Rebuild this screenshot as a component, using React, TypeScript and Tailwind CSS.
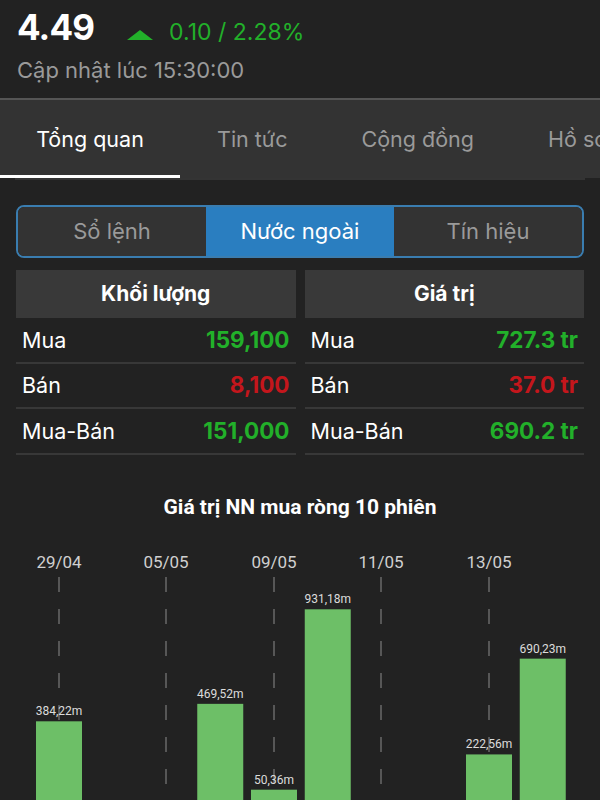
import React from 'react';

const tabs = ['Tổng quan', 'Tin tức', 'Cộng đồng', 'Hồ sơ'];
const segments = ['Sổ lệnh', 'Nước ngoài', 'Tín hiệu'];

const volumeRows = [
  { label: 'Mua', value: '159,100', up: true },
  { label: 'Bán', value: '8,100', up: false },
  { label: 'Mua-Bán', value: '151,000', up: true },
];

const valueRows = [
  { label: 'Mua', value: '727.3 tr', up: true },
  { label: 'Bán', value: '37.0 tr', up: false },
  { label: 'Mua-Bán', value: '690.2 tr', up: true },
];

// null = negative session, bar sits below the visible area
const sessions: (number | null)[] = [384.22, null, null, 469.52, 50.36, 931.18, null, null, 222.56, 690.23];
const dates = [
  { x: 59, text: '29/04' },
  { x: 166, text: '05/05' },
  { x: 274, text: '09/05' },
  { x: 381, text: '11/05' },
  { x: 489, text: '13/05' },
];

const fmt = (v: number) => v.toFixed(2).replace('.', ',') + 'm';

function DataTable({ title, rows }: { title: string; rows: typeof volumeRows }) {
  return (
    <div className="flex-1">
      <div className="h-12 bg-[#393939] flex items-center justify-center text-[21px] font-bold text-white">
        {title}
      </div>
      {rows.map((r) => (
        <div
          key={r.label}
          className="h-[45.5px] flex items-center justify-between px-[6px] border-b-2 border-[#383838]"
        >
          <span className="text-[21.5px] text-white">{r.label}</span>
          <span className={`text-[22.5px] font-bold ${r.up ? 'text-[#22b02a]' : 'text-[#c4161c]'}`}>
            {r.value}
          </span>
        </div>
      ))}
    </div>
  );
}

function NetChart() {
  const zero = 256;
  const k = 0.2048;
  return (
    <svg width="600" height="260" className="block" style={{ fontFamily: 'Roboto, sans-serif' }}>
      {dates.map((d) => (
        <g key={d.text}>
          <text x={d.x} y={24} textAnchor="middle" fontSize="17" fill="#d0d0d0">
            {d.text}
          </text>
          <line x1={d.x} x2={d.x} y1={33} y2={260} stroke="#8c8c8c" strokeWidth="1" strokeDasharray="15 17" />
        </g>
      ))}
      {sessions.map((v, i) => {
        if (v === null) return null;
        const cx = 59 + i * 53.75;
        const h = v * k;
        return (
          <g key={i}>
            <rect x={cx - 23} y={zero - h} width="46" height={h + 10} fill="#6dbf67" />
            <text x={cx} y={zero - h - 6} textAnchor="middle" fontSize="12" fill="#dcdcdc">
              {fmt(v)}
            </text>
          </g>
        );
      })}
    </svg>
  );
}

export default function App() {
  return (
    <div
      className="w-[600px] h-[800px] overflow-hidden bg-[#222222] text-white"
      style={{ fontFamily: 'Inter, "Noto Sans", sans-serif' }}
    >
      <header className="h-[98px] px-[17px] pt-[6px] bg-[#222222]">
        <div className="flex items-baseline h-[42px]">
          <span className="text-[35px] font-bold tracking-tight leading-[42px]">4.49</span>
          <svg width="26" height="10" viewBox="0 0 26 10" className="ml-[33px] mr-[16px]">
            <polygon points="13,0 26,10 0,10" fill="#22b02a" />
          </svg>
          <span className="text-[23px] text-[#22b02a]">0.10 / 2.28%</span>
        </div>
        <div className="mt-[6px] text-[22px] text-[#9a9a9a]">Cập nhật lúc 15:30:00</div>
      </header>
      <div className="h-[2px] bg-[#555555]" />
      <nav className="h-[78px] bg-[#333333] flex relative overflow-hidden">
        {tabs.map((t, i) => (
          <div
            key={t}
            className={`shrink-0 flex items-center justify-center text-[21.5px] ${
              i === 0 ? 'text-white w-[180px]' : 'text-[#9a9a9a] px-[37px]'
            }`}
          >
            {t}
          </div>
        ))}
        <div className="absolute left-0 bottom-0 w-[180px] h-[3px] bg-white" />
      </nav>
      <div className="h-[2px] mx-[15px] bg-[#343434]" />

      <div className="px-4 pt-[25px]">
        <div className="flex h-[53px] rounded-lg border-2 border-[#3a7db0] overflow-hidden">
          {segments.map((s, i) => (
            <div
              key={s}
              className={`flex-1 flex items-center justify-center text-[22px] ${
                i === 1 ? 'bg-[#2a7ec0] text-white' : 'bg-[#333333] text-[#9a9a9a]'
              }`}
            >
              {s}
            </div>
          ))}
        </div>

        <div className="flex gap-[9px] mt-[12px]">
          <DataTable title="Khối lượng" rows={volumeRows} />
          <DataTable title="Giá trị" rows={valueRows} />
        </div>
      </div>

      <div
        className="mt-[37px] text-center text-[21px] font-bold text-white"
        style={{ fontFamily: 'Roboto, sans-serif' }}
      >
        Giá trị NN mua ròng 10 phiên
      </div>
      <div className="mt-[21px]">
        <NetChart />
      </div>
    </div>
  );
}
